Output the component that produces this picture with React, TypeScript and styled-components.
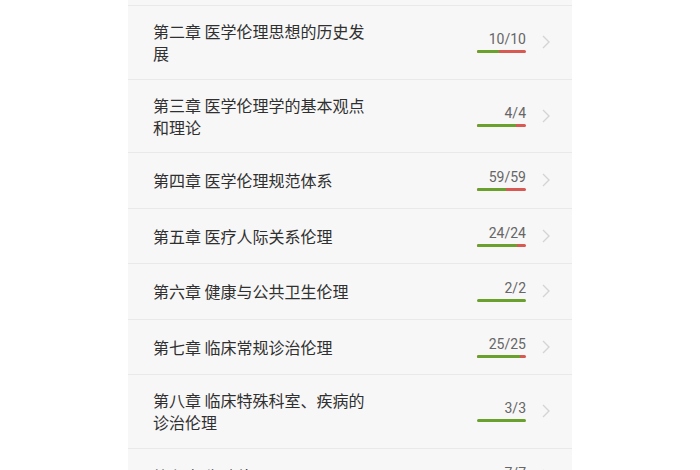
import React from "react";
import styled, { createGlobalStyle } from "styled-components";

const GlobalStyle = createGlobalStyle`
  html, body {
    margin: 0;
    padding: 0;
    background: #ffffff;
  }
  body {
    font-family: "Noto Sans CJK SC", "Noto Sans", sans-serif;
  }
`;

interface Chapter {
  title: string;
  done: number;
  total: number;
  // share of the bar drawn green, the rest is red
  ratio: number;
}

const chapters: Chapter[] = [
  { title: "第二章 医学伦理思想的历史发展", done: 10, total: 10, ratio: 0.45 },
  { title: "第三章 医学伦理学的基本观点和理论", done: 4, total: 4, ratio: 0.8 },
  { title: "第四章 医学伦理规范体系", done: 59, total: 59, ratio: 0.6 },
  { title: "第五章 医疗人际关系伦理", done: 24, total: 24, ratio: 0.82 },
  { title: "第六章 健康与公共卫生伦理", done: 2, total: 2, ratio: 1 },
  { title: "第七章 临床常规诊治伦理", done: 25, total: 25, ratio: 0.88 },
  { title: "第八章 临床特殊科室、疾病的诊治伦理", done: 3, total: 3, ratio: 1 },
  { title: "第九章 生殖伦理", done: 7, total: 7, ratio: 1 },
];

const Page = styled.div`
  height: 470px;
  overflow: hidden;
  display: flex;
  justify-content: center;
`;

const List = styled.div`
  width: 444px;
  background: #f7f7f7;
  padding-top: 5px;
`;

const Row = styled.div`
  display: flex;
  align-items: center;
  border-top: 1px solid #e9e9e9;
  padding: 14.25px 22px 14.25px 25px;
`;

const Title = styled.div`
  flex: 1;
  font-size: 16px;
  line-height: 22px;
  color: #303030;
`;

const TitleText = styled.div`
  max-width: 222px;
`;

const Progress = styled.div`
  display: flex;
  flex-direction: column;
  align-items: flex-end;
  box-sizing: border-box;
  height: 26px;
  padding-top: 1px;
`;

const Count = styled.div`
  font-family: Roboto, "Noto Sans", sans-serif;
  font-size: 14px;
  line-height: 18px;
  color: #666666;
`;

const Bar = styled.div`
  margin-top: 2px;
  width: 49px;
  height: 3px;
  border-radius: 2px;
  background: #d65a52;
  overflow: hidden;
`;

const BarFill = styled.div`
  height: 100%;
  background: #6aa02c;
`;

const Chevron = styled.svg`
  margin-left: 16px;
  flex: none;
`;

const ChapterRow: React.FC<{ chapter: Chapter }> = ({ chapter }) => (
  <Row>
    <Title>
      <TitleText>{chapter.title}</TitleText>
    </Title>
    <Progress>
      <Count>
        {chapter.done}/{chapter.total}
      </Count>
      <Bar>
        <BarFill style={{ width: `${chapter.ratio * 100}%` }} />
      </Bar>
    </Progress>
    <Chevron width="8" height="14" viewBox="0 0 8 14">
      <path d="M1 1 L7 7 L1 13" fill="none" stroke="#d4d4d4" strokeWidth="1.4" />
    </Chevron>
  </Row>
);

const App: React.FC = () => (
  <>
    <GlobalStyle />
    <Page>
      <List>
        {chapters.map((c) => (
          <ChapterRow key={c.title} chapter={c} />
        ))}
      </List>
    </Page>
  </>
);

export default App;
